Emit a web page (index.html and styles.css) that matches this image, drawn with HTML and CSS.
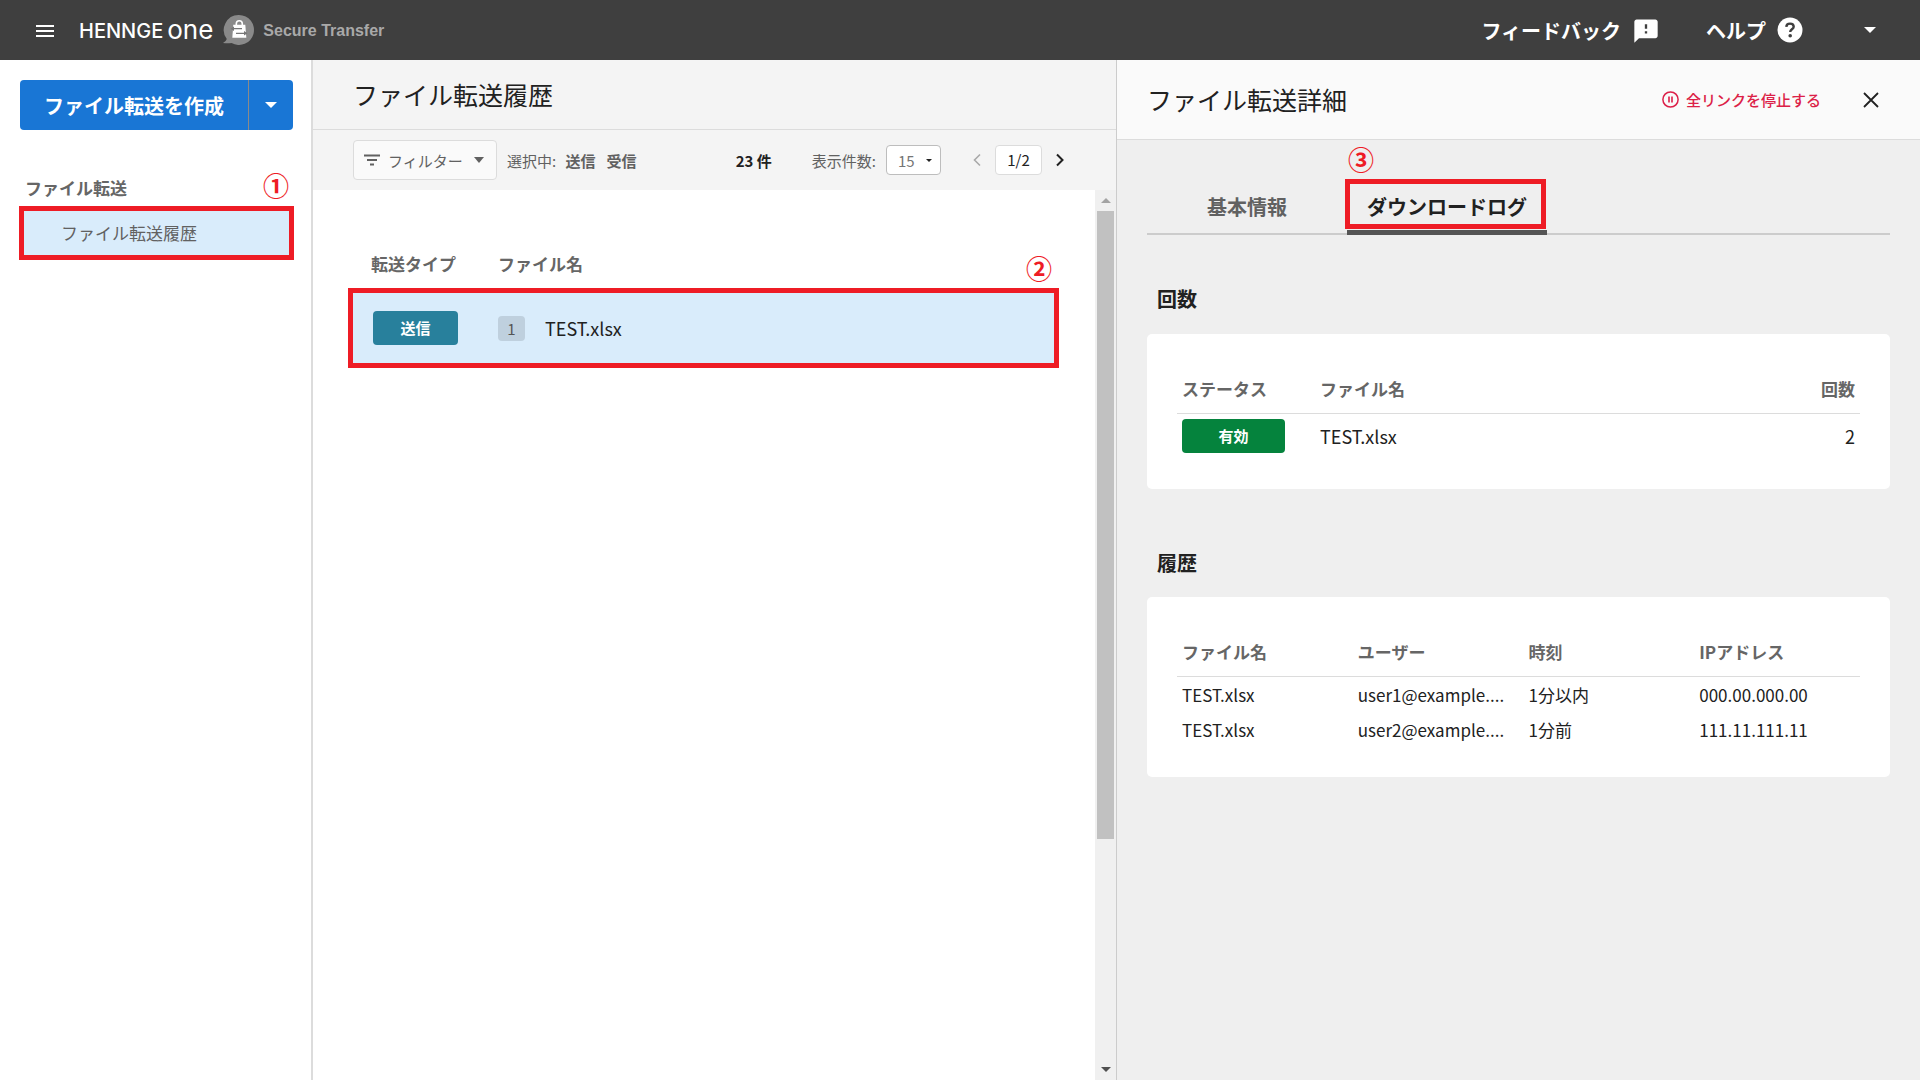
FILE: index.html
```html
<!DOCTYPE html>
<html lang="ja">
<head>
    <meta charset="UTF-8">
    <title>HENNGE One Secure Transfer</title>
    <link rel="stylesheet" href="styles.css">
</head>
<body>
    <header class="topbar">
        <button class="icon-button menu-button" aria-label="メニュー">
            <svg width="18" height="12" viewBox="0 0 18 12"><path d="M0 1h18M0 6h18M0 11h18" stroke="currentColor" stroke-width="2"/></svg>
        </button>
        <a class="brand" href="#">
            <span class="brand-hennge">HENNGE</span><span class="brand-one">one</span>
            <svg class="brand-icon" width="32" height="30" viewBox="0 0 32 30">
                <path d="M16 0a15 15 0 1 1-7.500 28Q5 28.500 0 28Q3 26.500 3.800 24A15 15 0 0 1 16 0z" fill="#8a8a8a"/>
                <path d="M13.300 10.500V8.800a3 3 0 0 1 6 0V10.500" fill="none" stroke="#fff" stroke-width="1.600"/>
                <path d="M10.300 9.700h12l1 13h-14z" fill="#fff"/>
                <path d="M9.500 13.700h9.500M13 18.300h9.500" fill="none" stroke="#777" stroke-width="1.200"/>
                <path d="M7.500 13.700l3.500-2.200v4.400zM24.500 18.300l-3.500-2.200v4.400z" fill="#777"/>
            </svg>
            <span class="brand-product">Secure Transfer</span>
        </a>
        <nav class="topbar-nav">
            <a class="topbar-link" href="#">フィードバック
                <svg width="28" height="30" viewBox="0 -1 24 24"><path fill="currentColor" d="M20 2H4c-1.100 0-1.990.9-1.990 2L2 22l4-4h14c1.100 0 2-.9 2-2V4c0-1.100-.9-2-2-2zm-7 12h-2v-2h2v2zm0-4h-2V6h2v4z"/></svg>
            </a>
            <a class="topbar-link" href="#">ヘルプ
                <svg width="26" height="26" viewBox="0 0 26 26">
                    <circle cx="13" cy="13" r="12.500" fill="#fff"/>
                    <path d="M9.300 9.900C9.400 7.800 10.900 6.600 13 6.600s3.700 1.200 3.700 3.100c0 2.500-3.500 2.700-3.500 5.300" fill="none" stroke="#3f3f3f" stroke-width="2.400"/>
                    <circle cx="13.200" cy="18.700" r="1.800" fill="#3f3f3f"/>
                </svg>
            </a>
            <button class="icon-button account-button" aria-label="アカウント"><span class="caret"></span></button>
        </nav>
    </header>

    <div class="layout">
        <aside class="sidebar">
            <div class="split-button">
                <button class="split-main">ファイル転送を作成</button>
                <button class="split-toggle" aria-label="その他の作成方法"><span class="caret"></span></button>
            </div>
            <div class="menu-heading">ファイル転送<span class="step step-menu">①</span></div>
            <a class="menu-item highlight" href="#">ファイル転送履歴</a>
        </aside>

        <main class="history">
            <div class="history-header">
                <h1>ファイル転送履歴</h1>
            </div>
            <div class="toolbar">
                <button class="filter-button">
                    <svg width="16" height="12" viewBox="0 0 16 12"><path d="M0 1.500h16M3 6h10M6 10.500h4" stroke="currentColor" stroke-width="1.800"/></svg>
                    <span>フィルター</span>
                    <span class="caret"></span>
                </button>
                <span class="filter-state">選択中: <b>送信</b><b>受信</b></span>
                <div class="paging">
                    <strong class="total">23 件</strong>
                    <label for="page-size">表示件数:</label>
                    <span class="select-wrap">
                        <select id="page-size">
                            <option>15</option>
                            <option>30</option>
                        </select>
                    </span>
                    <button class="icon-button page-prev" aria-label="前のページ" disabled>
                        <svg width="8" height="14" viewBox="0 0 8 14"><path d="M7 1.500L1.500 7 7 12.500" fill="none" stroke="currentColor" stroke-width="1.600"/></svg>
                    </button>
                    <span class="page-number">1/2</span>
                    <button class="icon-button page-next" aria-label="次のページ">
                        <svg width="8" height="14" viewBox="0 0 8 14"><path d="M1 1.500L6.500 7 1 12.500" fill="none" stroke="currentColor" stroke-width="2"/></svg>
                    </button>
                </div>
            </div>
            <div class="history-body">
                <div class="history-list">
                    <table class="transfers">
                        <thead>
                            <tr>
                                <th class="col-type">転送タイプ</th>
                                <th>ファイル名<span class="step step-row">②</span></th>
                            </tr>
                        </thead>
                        <tbody>
                            <tr class="highlight">
                                <td class="col-type"><span class="badge badge-send">送信</span></td>
                                <td><span class="file-count">1</span>TEST.xlsx</td>
                            </tr>
                        </tbody>
                    </table>
                </div>
                <div class="scrollbar">
                    <span class="scroll-arrow scroll-up"></span>
                    <div class="scroll-track"><div class="scroll-thumb"></div></div>
                    <span class="scroll-arrow scroll-down"></span>
                </div>
            </div>
        </main>

        <section class="detail">
            <div class="detail-header">
                <h2>ファイル転送詳細</h2>
                <button class="stop-button">
                    <svg width="17" height="17" viewBox="0 0 17 17"><circle cx="8.500" cy="8.500" r="7.600" fill="none" stroke="currentColor" stroke-width="1.500"/><path d="M7 5.500v6M10 5.500v6" stroke="currentColor" stroke-width="1.600"/></svg>
                    全リンクを停止する
                </button>
                <button class="icon-button close-button" aria-label="閉じる">
                    <svg width="16" height="16" viewBox="0 0 16 16"><path d="M1 1l14 14M15 1L1 15" stroke="currentColor" stroke-width="1.800"/></svg>
                </button>
            </div>
            <div class="detail-body">
                <div class="tabs">
                    <button class="tab">基本情報</button>
                    <button class="tab active">ダウンロードログ<span class="step step-tab">③</span></button>
                </div>

                <h3>回数</h3>
                <div class="card">
                    <table class="log counts">
                        <thead>
                            <tr><th class="col-status">ステータス</th><th>ファイル名</th><th class="col-count">回数</th></tr>
                        </thead>
                        <tbody>
                            <tr><td><span class="badge badge-active">有効</span></td><td>TEST.xlsx</td><td class="col-count">2</td></tr>
                        </tbody>
                    </table>
                </div>

                <h3>履歴</h3>
                <div class="card">
                    <table class="log">
                        <thead>
                            <tr><th>ファイル名</th><th>ユーザー</th><th>時刻</th><th>IPアドレス</th></tr>
                        </thead>
                        <tbody>
                            <tr><td>TEST.xlsx</td><td>user1@example....</td><td>1分以内</td><td>000.00.000.00</td></tr>
                            <tr><td>TEST.xlsx</td><td>user2@example....</td><td>1分前</td><td>111.11.111.11</td></tr>
                        </tbody>
                    </table>
                </div>
            </div>
        </section>
    </div>
</body>
</html>
```

FILE: styles.css
```css
* {
    box-sizing: border-box;
}

body {
    margin: 0;
    height: 100vh;
    display: flex;
    flex-direction: column;
    font-family: "Noto Sans CJK JP", sans-serif;
    font-size: 17px;
    color: #212121;
    background: #fff;
}

button, select {
    font-family: inherit;
    color: inherit;
    margin: 0;
    padding: 0;
    border: none;
    background: none;
    cursor: pointer;
}

a {
    color: inherit;
    text-decoration: none;
}

svg {
    display: block;
    flex: none;
}

h1, h2 {
    margin: 0;
    padding-bottom: 2px;
    font-size: 25px;
    font-weight: 400;
}

.icon-button {
    display: flex;
    align-items: center;
    justify-content: center;
}

.caret {
    border: 6px solid transparent;
    border-top-color: currentColor;
    border-bottom: none;
}

/* Top bar */
.topbar {
    flex: none;
    height: 60px;
    display: flex;
    align-items: center;
    padding: 0 38px 0 36px;
    background: #3f3f3f;
    color: #fff;
}

.menu-button {
    padding-top: 2px;
}

.brand {
    display: flex;
    align-items: center;
    margin-left: 25px;
    line-height: 30px;
}

.brand-hennge {
    padding-top: 2px;
    font-family: Inter, sans-serif;
    font-size: 20px;
    font-weight: 500;
}

.brand-one {
    margin: 0 10px 0 4px;
    font-family: Inter, sans-serif;
    font-size: 26px;
}

.brand-product {
    margin-left: 8px;
    padding-top: 2px;
    font-family: "Liberation Sans", sans-serif;
    font-size: 16px;
    font-weight: bold;
    color: #a9a9a9;
}

.topbar-nav {
    display: flex;
    align-items: center;
    gap: 46px;
    margin-left: auto;
}

.topbar-link {
    display: flex;
    align-items: center;
    gap: 11px;
    font-size: 20px;
    font-weight: bold;
}

.account-button {
    width: 24px;
    margin-left: 9px;
}

/* Sidebar */
.layout {
    flex: 1;
    min-height: 0;
    display: flex;
}

.sidebar {
    flex: none;
    width: 313px;
    padding: 20px 18px 0 20px;
    border-right: 2px solid #dcdcdc;
}

.split-button {
    display: flex;
    height: 50px;
    border-radius: 4px;
    background: #1976d5;
    color: #fff;
}

.split-main {
    flex: 1;
    font-size: 20px;
    font-weight: bold;
}

.split-toggle {
    width: 45px;
    display: flex;
    align-items: center;
    justify-content: center;
    border-left: 1px solid #8a8a8a;
}

.menu-heading {
    position: relative;
    margin: 43px 0 8px 5px;
    line-height: 30px;
    font-weight: bold;
    color: #666;
}

.menu-item {
    display: block;
    margin: 0 4px;
    padding-left: 37px;
    line-height: 44px;
    background: #d9ecfb;
    color: #616161;
}

/* Numbered steps and their red frames */
.highlight {
    outline: 5px solid #ee1c25;
}

.step {
    position: absolute;
    font-size: 26px;
    font-weight: bold;
    line-height: 30px;
    color: #ee1c25;
}

.step-menu {
    top: -3px;
    right: 4px;
}

.step-row {
    top: 18px;
    right: 2px;
}

.step-tab {
    top: -41px;
    left: 1px;
}

/* Transfer history */
.history {
    flex: 1;
    min-width: 0;
    display: flex;
    flex-direction: column;
}

.history-header {
    flex: none;
    height: 70px;
    display: flex;
    align-items: center;
    padding: 0 40px;
    background: #f4f4f4;
    border-bottom: 1px solid #dcdcdc;
}

.toolbar {
    flex: none;
    height: 60px;
    display: flex;
    align-items: center;
    padding: 0 44px 0 40px;
    background: #f4f4f4;
    font-size: 15px;
    color: #616161;
    white-space: nowrap;
}

.filter-button {
    width: 144px;
    height: 40px;
    display: flex;
    align-items: center;
    gap: 8px;
    padding: 0 12px 0 10px;
    border: 1px solid #dcdcdc;
    border-radius: 4px;
    background: #fafafa;
    font-size: 15px;
}

.filter-button .caret {
    margin-left: auto;
    border-width: 6px 5px 0;
}

.filter-state {
    margin-left: 10px;
}

.filter-state b {
    margin: 0 5px 0 6px;
}

.paging {
    display: flex;
    align-items: center;
    margin-left: auto;
}

.total {
    margin-right: 40px;
    color: #212121;
}

.select-wrap {
    position: relative;
    margin: 0 24px 0 10px;
}

.select-wrap::after {
    content: "";
    position: absolute;
    top: 14px;
    right: 9px;
    border: 3px solid transparent;
    border-top-color: #212121;
    border-bottom: none;
    pointer-events: none;
}

.select-wrap select {
    display: block;
    width: 55px;
    height: 30px;
    padding-left: 11px;
    appearance: none;
    border: 1px solid #bdbdbd;
    border-radius: 4px;
    background: #fff;
    font-size: 15px;
    color: #757575;
}

.page-prev, .page-next {
    width: 24px;
    height: 30px;
}

.page-prev {
    color: #a9a9a9;
}

.page-next {
    color: #212121;
}

.page-number {
    width: 47px;
    margin: 0 6px;
    text-align: center;
    line-height: 28px;
    border: 1px solid #dcdcdc;
    border-radius: 4px;
    background: #fff;
    color: #212121;
}

.history-body {
    flex: 1;
    min-height: 0;
    display: flex;
}

.history-list {
    flex: 1;
    padding: 45px 41px 0 40px;
}

.transfers {
    position: relative;
    width: 100%;
    table-layout: fixed;
    border-collapse: collapse;
    text-align: left;
}

.transfers th {
    height: 58px;
    padding: 0 0 2px;
    color: #666;
}

.transfers td {
    height: 70px;
    padding: 0;
    background: #d9ecfb;
    font-size: 18px;
}

.transfers .col-type {
    width: 145px;
    padding-left: 20px;
}

.transfers th.col-type {
    padding-left: 18px;
}

.badge {
    display: block;
    line-height: 34px;
    border-radius: 4px;
    text-align: center;
    font-size: 15px;
    font-weight: bold;
    color: #fff;
}

.badge-send {
    width: 85px;
    background: #28809c;
}

.badge-active {
    width: 103px;
    background: #05833d;
}

.file-count {
    display: inline-block;
    width: 27px;
    margin-right: 20px;
    line-height: 25px;
    border-radius: 4px;
    background: #bfd0de;
    text-align: center;
    vertical-align: 1px;
    font-size: 15px;
    color: #555;
}

.scrollbar {
    flex: none;
    width: 21px;
    display: flex;
    flex-direction: column;
    background: #f0f0f0;
}

.scroll-arrow {
    height: 21px;
    display: flex;
    align-items: center;
    justify-content: center;
    color: #505050;
}

.scroll-arrow::after {
    content: "";
    border: 5px solid transparent;
    border-top-color: currentColor;
    border-bottom: none;
}

.scroll-up {
    color: #a3a3a3;
}

.scroll-up::after {
    border-top: none;
    border-bottom: 5px solid currentColor;
}

.scroll-track {
    flex: 1;
    padding: 0 2px;
}

.scroll-thumb {
    height: 74%;
    background: #c1c1c1;
}

/* Transfer detail */
.detail {
    flex: none;
    width: calc(50% - 156px);
    display: flex;
    flex-direction: column;
    border-left: 1px solid #ccc;
    background: #efefef;
}

.detail-header {
    flex: none;
    height: 80px;
    display: flex;
    align-items: center;
    padding: 0 37px 0 30px;
    border-bottom: 1px solid #dcdcdc;
    background: #fafafa;
}

.stop-button {
    display: flex;
    align-items: center;
    gap: 7px;
    margin-left: auto;
    font-size: 15px;
    font-weight: 500;
    color: #dc1f48;
}

.close-button {
    width: 24px;
    height: 24px;
    margin-left: 38px;
}

.detail-body {
    padding: 40px 30px;
}

.tabs {
    display: flex;
    border-bottom: 2px solid #ccc;
}

.tab {
    position: relative;
    width: 200px;
    height: 55px;
    margin-bottom: -2px;
    padding-bottom: 2px;
    font-size: 20px;
    font-weight: bold;
    color: #616161;
}

.tab.active {
    border-top: 5px solid transparent;
    border-bottom: 5px solid #555;
    color: #212121;
}

.tab.active::before {
    content: "";
    position: absolute;
    inset: -6px 1px 1px -2px;
    border: 5px solid #ee1c25;
}

.detail-body h3 {
    margin: 49px 0 20px 10px;
    font-size: 20px;
    line-height: 30px;
}

.card {
    padding: 30px;
    border-radius: 5px;
    background: #fff;
}

.card + h3 {
    margin: 59px 0 19px 10px;
}

.log {
    width: 100%;
    table-layout: fixed;
    border-collapse: separate;
    border-spacing: 0;
    text-align: left;
    white-space: nowrap;
}

.log th {
    height: 50px;
    padding: 0 10px;
    border-bottom: 1px solid #dcdcdc;
    color: #666;
}

.log td {
    height: 35px;
    padding: 0 10px;
}

.counts td {
    height: 45px;
    padding-bottom: 2px;
    font-size: 18px;
}

.log th:first-child, .log td:first-child {
    padding-left: 5px;
}

.log .col-status {
    width: 133px;
}

.log .col-count {
    padding-right: 5px;
    text-align: right;
}
```
